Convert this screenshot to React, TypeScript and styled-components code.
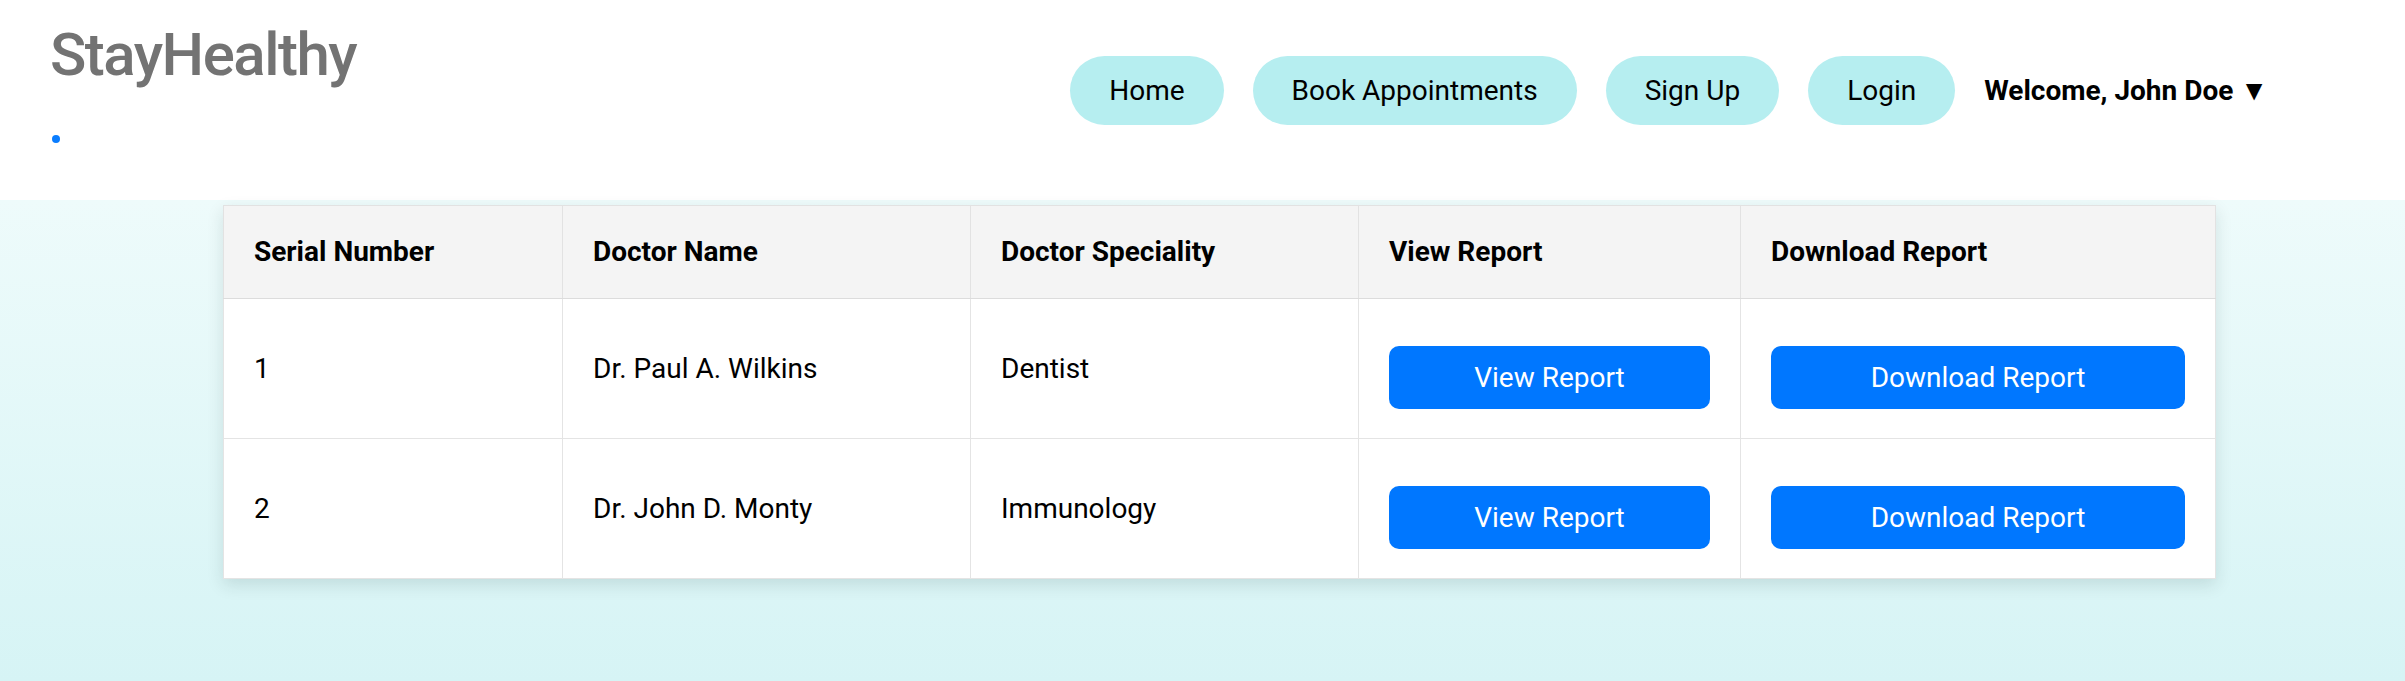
import styled, { createGlobalStyle } from 'styled-components';

const GlobalStyle = createGlobalStyle`
  html, body {
    margin: 0;
    padding: 0;
  }
  body {
    font-family: Roboto, "Liberation Sans", Arial, sans-serif;
    color: #000;
    background: #fff;
  }
  * {
    box-sizing: border-box;
  }
`;

const Page = styled.div`
  display: flex;
  flex-direction: column;
  min-height: 100vh;
`;

const Header = styled.header`
  display: flex;
  justify-content: space-between;
  align-items: flex-start;
  height: 200px;
  padding: 20px 137px 0 50px;
  background: #fff;
`;

const Brand = styled.div`
  display: flex;
  flex-direction: column;
`;

const Logo = styled.div`
  font-size: 60px;
  font-weight: 500;
  color: #737373;
  letter-spacing: -1.5px;
  line-height: 70px;
`;

const Dot = styled.span`
  width: 8px;
  height: 8px;
  border-radius: 50%;
  background: #0a7dff;
  margin: 45px 0 0 2px;
`;

const Nav = styled.nav`
  display: flex;
  align-items: center;
  gap: 29px;
  margin-top: 36px;
`;

const NavButton = styled.a`
  display: inline-block;
  padding: 18px 39px;
  border-radius: 40px;
  background: #b6eef0;
  color: #000;
  font-size: 28px;
  line-height: 33px;
  text-decoration: none;
  cursor: pointer;
`;

const Welcome = styled.div`
  font-size: 28px;
  font-weight: 700;
  line-height: 33px;
  cursor: pointer;
  white-space: nowrap;
`;

const Main = styled.main`
  flex: 1;
  padding: 5px 190px 40px 223px;
  background: linear-gradient(to bottom, #eefbfb, #d6f4f5);
`;

const Table = styled.table`
  width: 1992px;
  border-collapse: collapse;
  table-layout: fixed;
  background: #fff;
  border: 1px solid #dcdcdc;
  box-shadow: 0 6px 16px rgba(0, 40, 40, 0.12);
`;

const HeadCell = styled.th<{ $width: number }>`
  width: ${p => p.$width}px;
  padding: 30px 30px;
  background: #f4f4f4;
  border: 1px solid #e2e2e2;
  border-bottom-color: #dcdcdc;
  text-align: left;
  font-size: 28px;
  font-weight: 700;
  line-height: 32px;
`;

const Cell = styled.td`
  padding: 29px 30px;
  border: 1px solid #e4e4e4;
  border-top-color: #dcdcdc;
  vertical-align: middle;
  font-size: 28px;
  line-height: 33px;
`;

const ReportButton = styled.button`
  display: block;
  width: 100%;
  height: 63px;
  margin-top: 18px;
  border: none;
  border-radius: 10px;
  background: #0077ff;
  color: #fff;
  font-family: inherit;
  font-size: 28px;
  cursor: pointer;
`;

const columns = [
  { title: 'Serial Number', width: 339 },
  { title: 'Doctor Name', width: 408 },
  { title: 'Doctor Speciality', width: 388 },
  { title: 'View Report', width: 382 },
  { title: 'Download Report', width: 475 },
];

const reports = [
  { id: 1, doctor: 'Dr. Paul A. Wilkins', speciality: 'Dentist' },
  { id: 2, doctor: 'Dr. John D. Monty', speciality: 'Immunology' },
];

export default function App() {
  return (
    <Page>
      <GlobalStyle />
      <Header>
        <Brand>
          <Logo>StayHealthy</Logo>
          <Dot />
        </Brand>
        <Nav>
          <NavButton>Home</NavButton>
          <NavButton>Book Appointments</NavButton>
          <NavButton>Sign Up</NavButton>
          <NavButton>Login</NavButton>
          <Welcome>Welcome, John Doe ▼</Welcome>
        </Nav>
      </Header>
      <Main>
        <Table>
          <thead>
            <tr>
              {columns.map(c => (
                <HeadCell key={c.title} $width={c.width}>{c.title}</HeadCell>
              ))}
            </tr>
          </thead>
          <tbody>
            {reports.map(r => (
              <tr key={r.id}>
                <Cell>{r.id}</Cell>
                <Cell>{r.doctor}</Cell>
                <Cell>{r.speciality}</Cell>
                <Cell><ReportButton>View Report</ReportButton></Cell>
                <Cell><ReportButton>Download Report</ReportButton></Cell>
              </tr>
            ))}
          </tbody>
        </Table>
      </Main>
    </Page>
  );
}
